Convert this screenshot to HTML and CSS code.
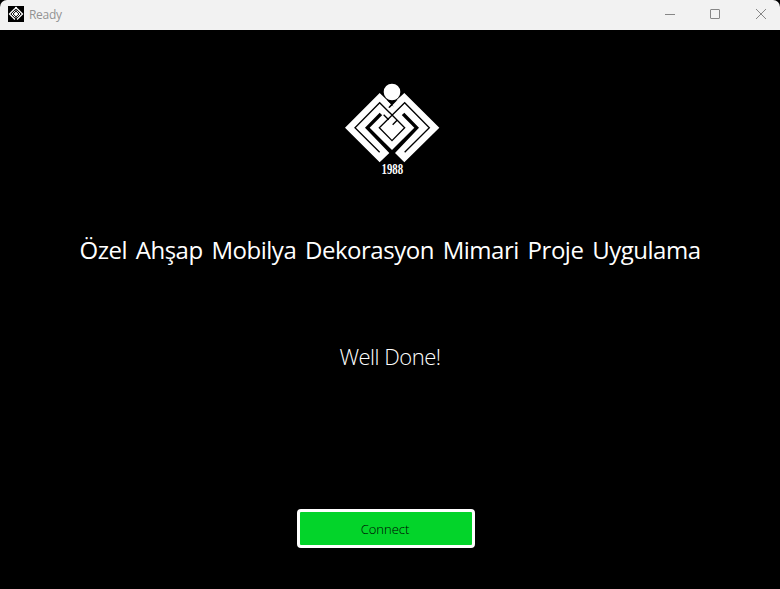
FILE: index.html
```html
<!DOCTYPE html>
<html lang="tr">
<head>
<meta charset="utf-8">
<title>Ready</title>
<link rel="stylesheet" href="styles.css">
</head>
<body>
<div class="window">
  <header class="titlebar">
    <svg class="app-icon" viewBox="0 0 16 16">
      <rect width="16" height="16" fill="#000"/>
      <g fill="none" stroke="#fff">
        <path d="M7 2.500 1.500 8 7 13.500M9 2.500 14.500 8 9 13.500" stroke-width="1.300"/>
        <path d="M7.500 4.500 4 8l3.500 3.500M8.500 4.500 12 8l-3.500 3.500" stroke-width="1"/>
      </g>
      <path d="M8 5.500 10.500 8 8 10.500 5.500 8z" fill="#fff"/>
      <circle cx="8" cy="2" r="1.200" fill="#fff"/>
    </svg>
    <span class="title">Ready</span>
    <svg class="controls" viewBox="0 0 102 12" fill="none" stroke="#868686">
      <path d="M0 6.500h10"/>
      <rect x="45.500" y="1.500" width="9" height="9" rx=".5"/>
      <path d="M91 1l10 10M101 1 91 11"/>
    </svg>
  </header>
  <main class="content">
    <svg class="logo" viewBox="0 0 345 315">
      <circle cx="171" cy="51" r="25" fill="#fff"/>
      <path fill="#fff" d="M134 54 30 158 134 262 163 234 90 158 134 113 150 128 180 98zM208 54 313 158 208 262 180 234 252 158 208 113 192 128 160 98z"/>
      <path fill="#fff" d="M171 91 238 158 171 225 104 158z"/>
      <path fill="#fff" d="M164 94 138 115 155 135 186 132 203 115 182 94z"/>
      <g fill="none" stroke="#000" stroke-width="4">
        <path d="M134 232 60 158 134 83 164 113M209 232 283 158 209 83 133 158 171 197 209 158 163 112M187 135 173 149"/>
        <path d="M146 119 161 134"/>
      </g>
      <path fill="#000" d="M155 75 171 81 188 74 164 99 160 97 168 88z"/>
      <text x="172" y="297" textLength="65" lengthAdjust="spacingAndGlyphs" text-anchor="middle" class="year">1988</text>
    </svg>
    <h1 class="headline">Özel Ahşap Mobilya Dekorasyon Mimari Proje Uygulama</h1>
    <p class="status">Well Done!</p>
    <button class="connect">Connect</button>
  </main>
</div>
</body>
</html>
```
FILE: styles.css
```css
* { box-sizing: border-box; }
body {
  margin: 0;
  background: #000;
  font-family: "Open Sans", "Noto Sans", sans-serif;
}
.window {
  height: 589px;
  display: flex;
  flex-direction: column;
  overflow: hidden;
}
.titlebar {
  height: 30px;
  flex: none;
  display: flex;
  align-items: center;
  padding: 0 13px 2px 8px;
  background: #f2f2f2;
  border-radius: 7px 7px 0 0;
}
.app-icon { width: 16px; height: 16px; }
.title {
  margin-left: 5px;
  font-size: 12px;
  line-height: 16px;
  letter-spacing: -0.3px;
  color: #929292;
  position: relative;
  top: 1px;
}
.controls { width: 102px; height: 12px; margin-left: auto; }
.content {
  flex: 1;
  display: flex;
  flex-direction: column;
  align-items: center;
}
.logo {
  width: 115px;
  height: 105px;
  margin: 45px 0 0 5px;
}
.year {
  font: bold 46px "Liberation Serif", serif;
  fill: #fff;
}
.headline {
  margin: 52px 0 0;
  font-size: 24px;
  line-height: 36px;
  font-weight: 400;
  letter-spacing: -0.48px;
  word-spacing: 3px;
  white-space: nowrap;
  color: #fff;
}
.status {
  margin: 70px 0 0;
  font-size: 22px;
  line-height: 36px;
  font-weight: 300;
  letter-spacing: -0.5px;
  color: #fff;
}
.connect {
  width: 178px;
  height: 39px;
  margin: 135px 8px 0 0;
  padding: 0 2px 0 0;
  border: 3px solid #fff;
  border-radius: 4px;
  background: #03d42a;
  color: #000;
  font: 300 13px "Open Sans", sans-serif;
}
```
